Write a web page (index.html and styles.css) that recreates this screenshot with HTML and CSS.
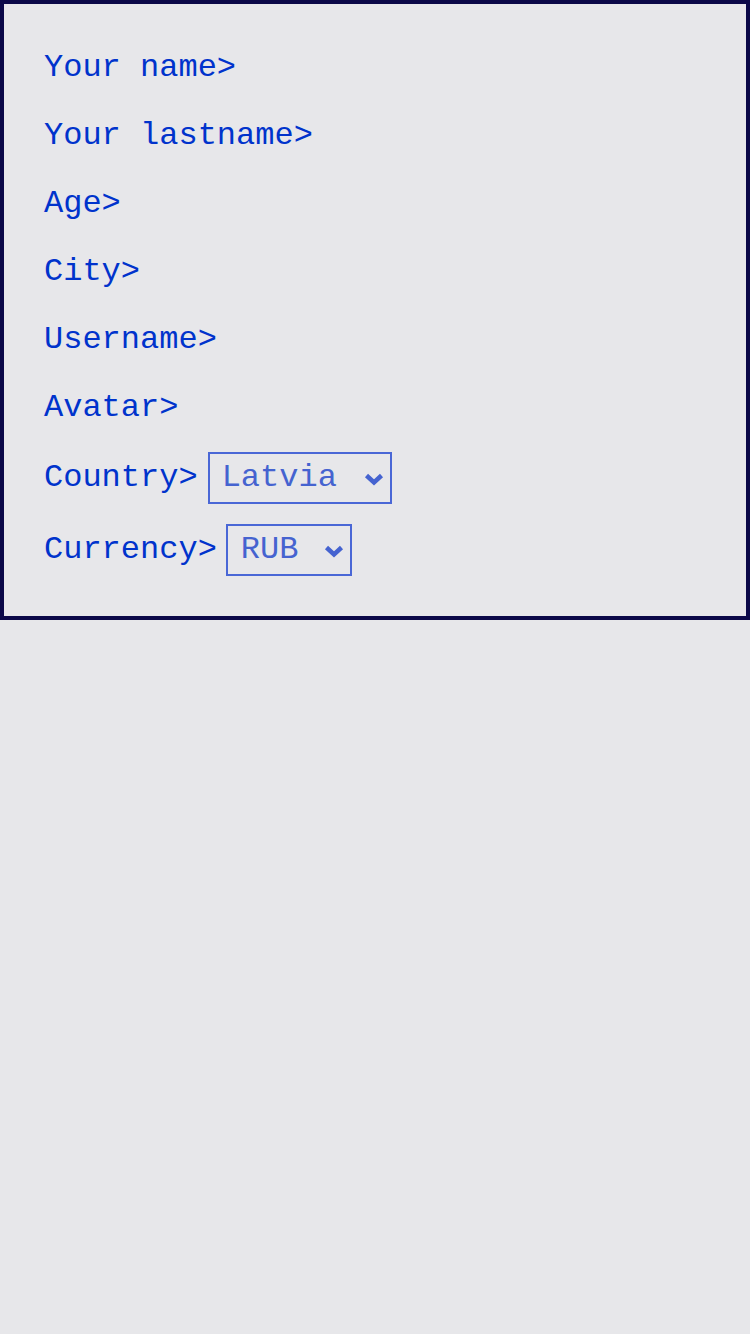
FILE: index.html
```html
<!DOCTYPE html>
<html>
<head>
<meta charset="utf-8">
<link rel="stylesheet" href="styles.css">
</head>
<body>
<form class="panel">
  <div class="row">Your name&gt;</div>
  <div class="row">Your lastname&gt;</div>
  <div class="row">Age&gt;</div>
  <div class="row">City&gt;</div>
  <div class="row">Username&gt;</div>
  <div class="row">Avatar&gt;</div>
  <div class="row row-select">
    <span>Country&gt;</span>
    <span class="select-wrap">
      <select class="select select-country"><option>Latvia</option></select>
      <svg class="chevron" width="20" height="14" viewBox="0 0 20 14"><path d="M2.5 3.5 L10 10.5 L17.5 3.5" fill="none" stroke="#4563d0" stroke-width="4.5" stroke-linecap="butt" stroke-linejoin="miter"/></svg>
    </span>
  </div>
  <div class="row row-select row-last">
    <span>Currency&gt;</span>
    <span class="select-wrap">
      <select class="select select-currency"><option>RUB</option></select>
      <svg class="chevron" width="20" height="14" viewBox="0 0 20 14"><path d="M2.5 3.5 L10 10.5 L17.5 3.5" fill="none" stroke="#4563d0" stroke-width="4.5" stroke-linecap="butt" stroke-linejoin="miter"/></svg>
    </span>
  </div>
</form>
</body>
</html>
```
FILE: styles.css
```css
html, body {
  margin: 0;
  padding: 0;
  background: #e7e7ea;
}
body {
  width: 750px;
  height: 1334px;
  font-family: "Liberation Mono", "DejaVu Sans Mono", monospace;
}
.panel {
  margin: 0;
  border: 4px solid #0b0848;
  padding: 40px;
  display: flex;
  flex-direction: column;
  gap: 22px;
  color: #0033cc;
  font-size: 32px;
}
.row {
  height: 46px;
  line-height: 48px;
  white-space: pre;
}
.row-select {
  height: 52px;
  line-height: 52px;
  display: flex;
  align-items: center;
  gap: 10px;
}
.row-last {
  margin-top: -2px;
  gap: 9px;
}
.select-wrap {
  position: relative;
  display: inline-flex;
}
.select {
  appearance: none;
  -webkit-appearance: none;
  height: 52px;
  margin: 0;
  border: 2px solid #4a67d6;
  border-radius: 0;
  background: transparent;
  color: #4563d0;
  font-family: "Liberation Mono", "DejaVu Sans Mono", monospace;
  font-size: 32px;
  line-height: 48px;
  padding: 0 52px 0 12px;
}
.select-currency {
  padding-left: 13px;
  padding-right: 51px;
}
.chevron {
  position: absolute;
  right: 8px;
  top: 20px;
  pointer-events: none;
}
```
